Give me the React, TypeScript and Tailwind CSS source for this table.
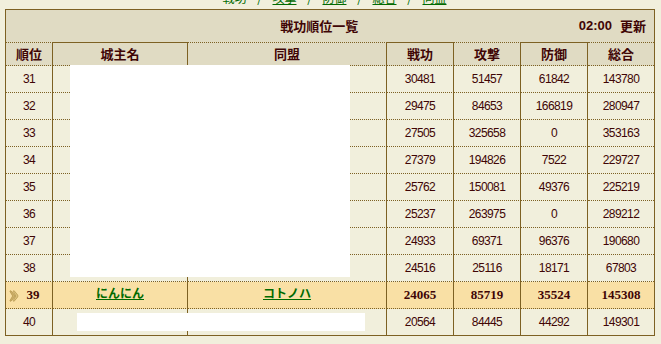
import React from "react";

type Row = {
  rank: number;
  lord?: string;
  alliance?: string;
  merit: number;
  attack: number;
  defense: number;
  total: number;
  mine?: boolean;
};

const rows: Row[] = [
  { rank: 31, merit: 30481, attack: 51457, defense: 61842, total: 143780 },
  { rank: 32, merit: 29475, attack: 84653, defense: 166819, total: 280947 },
  { rank: 33, merit: 27505, attack: 325658, defense: 0, total: 353163 },
  { rank: 34, merit: 27379, attack: 194826, defense: 7522, total: 229727 },
  { rank: 35, merit: 25762, attack: 150081, defense: 49376, total: 225219 },
  { rank: 36, merit: 25237, attack: 263975, defense: 0, total: 289212 },
  { rank: 37, merit: 24933, attack: 69371, defense: 96376, total: 190680 },
  { rank: 38, merit: 24516, attack: 25116, defense: 18171, total: 67803 },
  {
    rank: 39,
    lord: "にんにん",
    alliance: "コトノハ",
    merit: 24065,
    attack: 85719,
    defense: 35524,
    total: 145308,
    mine: true,
  },
  { rank: 40, merit: 20564, attack: 84445, defense: 44292, total: 149301 },
];

const navLinks = ["戦功", "攻撃", "防御", "総合", "同盟"];

const jp = "font-['Noto_Sans_CJK_JP','Noto_Sans',sans-serif]";
const num = "font-['Liberation_Sans',Arial,sans-serif] text-[12px] tracking-[-0.6px]";
const numBold = "font-['Liberation_Serif','Times_New_Roman',serif] text-[13px] font-bold";

const Marker = () => (
  <svg width="10" height="12" viewBox="0 0 10 12" className="absolute left-[3px] top-[8px]">
    <path
      d="M1 1.5 Q1 0.5 2 0.8 L5.5 5 Q6 6 5.5 7 L2 11.2 Q1 11.5 1 10.5 L3.6 6 Z"
      fill="#cdb06a"
      stroke="#a8883e"
      strokeWidth="0.6"
    />
    <path
      d="M4.2 1.5 Q4.2 0.5 5.2 0.8 L8.7 5 Q9.2 6 8.7 7 L5.2 11.2 Q4.2 11.5 4.2 10.5 L6.8 6 Z"
      fill="#dcc27e"
      stroke="#a8883e"
      strokeWidth="0.6"
    />
  </svg>
);

const headCells: { label: string; solidTop: boolean }[] = [
  { label: "順位", solidTop: false },
  { label: "城主名", solidTop: true },
  { label: "同盟", solidTop: false },
  { label: "戦功", solidTop: true },
  { label: "攻撃", solidTop: false },
  { label: "防御", solidTop: true },
  { label: "総合", solidTop: false },
];

export default function App() {
  return (
    <div className={`min-h-[344px] w-[661px] bg-[#f1efdc] text-[#3f0505] ${jp}`}>
      {/* tab links, mostly scrolled off the top */}
      <div className="h-[9px] overflow-hidden">
        <div className="-mt-[9px] flex pl-[222px] text-[12px] leading-[14px] text-[#006a00]">
          {navLinks.map((label, i) => (
            <React.Fragment key={label}>
              {i > 0 && <span className="w-[25px] text-center">/</span>}
              <span className={`w-[25px] text-center ${i > 0 ? "underline" : ""}`}>{label}</span>
            </React.Fragment>
          ))}
        </div>
      </div>

      <div className="relative ml-[5px] w-[650px] border border-[#7d6123]">
        {/* title bar */}
        <div className="flex h-[32px] items-center bg-[#e0dbc3] text-[13px] font-bold">
          <div className="flex-1 pl-[54px] text-center">戦功順位一覧</div>
          <div className="flex pr-[8px]">
            <span className="font-['Liberation_Sans',Arial,sans-serif]">02:00</span>
            <span className="ml-[8px]">更新</span>
          </div>
        </div>

        <div className="grid grid-cols-[47px_135px_199px_67px_67px_67px_66px]">
          {headCells.map((c, i) => (
            <div
              key={c.label}
              className={`flex h-[24px] items-center justify-center border-t border-b border-[#7d6123] bg-[#e0dbc3] text-[13px] font-bold [border-bottom-style:dotted] ${
                c.solidTop ? "" : "[border-top-style:dotted]"
              } ${i < 6 ? "border-r" : ""}`}
            >
              {c.label}
            </div>
          ))}

          {rows.map((r, ri) => {
            const last = ri === rows.length - 1;
            const cell = `flex items-center justify-center border-[#7d6123] ${
              last ? "h-[26px]" : "h-[27px] border-b [border-bottom-style:dotted]"
            } ${r.mine ? "bg-[#f9e0a5]" : "bg-[#f1efdc]"}`;
            const n = r.mine ? numBold : num;
            return (
              <React.Fragment key={r.rank}>
                <div className={`${cell} relative border-r`}>
                  {r.mine && <Marker />}
                  <span className={r.mine ? `${numBold} pl-[8px]` : num}>{r.rank}</span>
                </div>
                <div className={`${cell} border-r`}>
                  {r.lord && (
                    <span className="-mt-[5px] text-[12px] font-bold text-[#006a00] underline">{r.lord}</span>
                  )}
                </div>
                <div className={`${cell} border-r`}>
                  {r.alliance && (
                    <span className="-mt-[5px] text-[12px] font-bold text-[#006a00] underline">{r.alliance}</span>
                  )}
                </div>
                <div className={`${cell} border-r`}>
                  <span className={n}>{r.merit}</span>
                </div>
                <div className={`${cell} border-r`}>
                  <span className={n}>{r.attack}</span>
                </div>
                <div className={`${cell} border-r`}>
                  <span className={n}>{r.defense}</span>
                </div>
                <div className={cell}>
                  <span className={n}>{r.total}</span>
                </div>
              </React.Fragment>
            );
          })}
        </div>

        {/* blanked-out name columns */}
        <div className="absolute left-[64px] top-[55px] h-[212px] w-[280px] bg-white" />
        <div className="absolute left-[71px] top-[303px] h-[18px] w-[288px] bg-white" />
      </div>
    </div>
  );
}
